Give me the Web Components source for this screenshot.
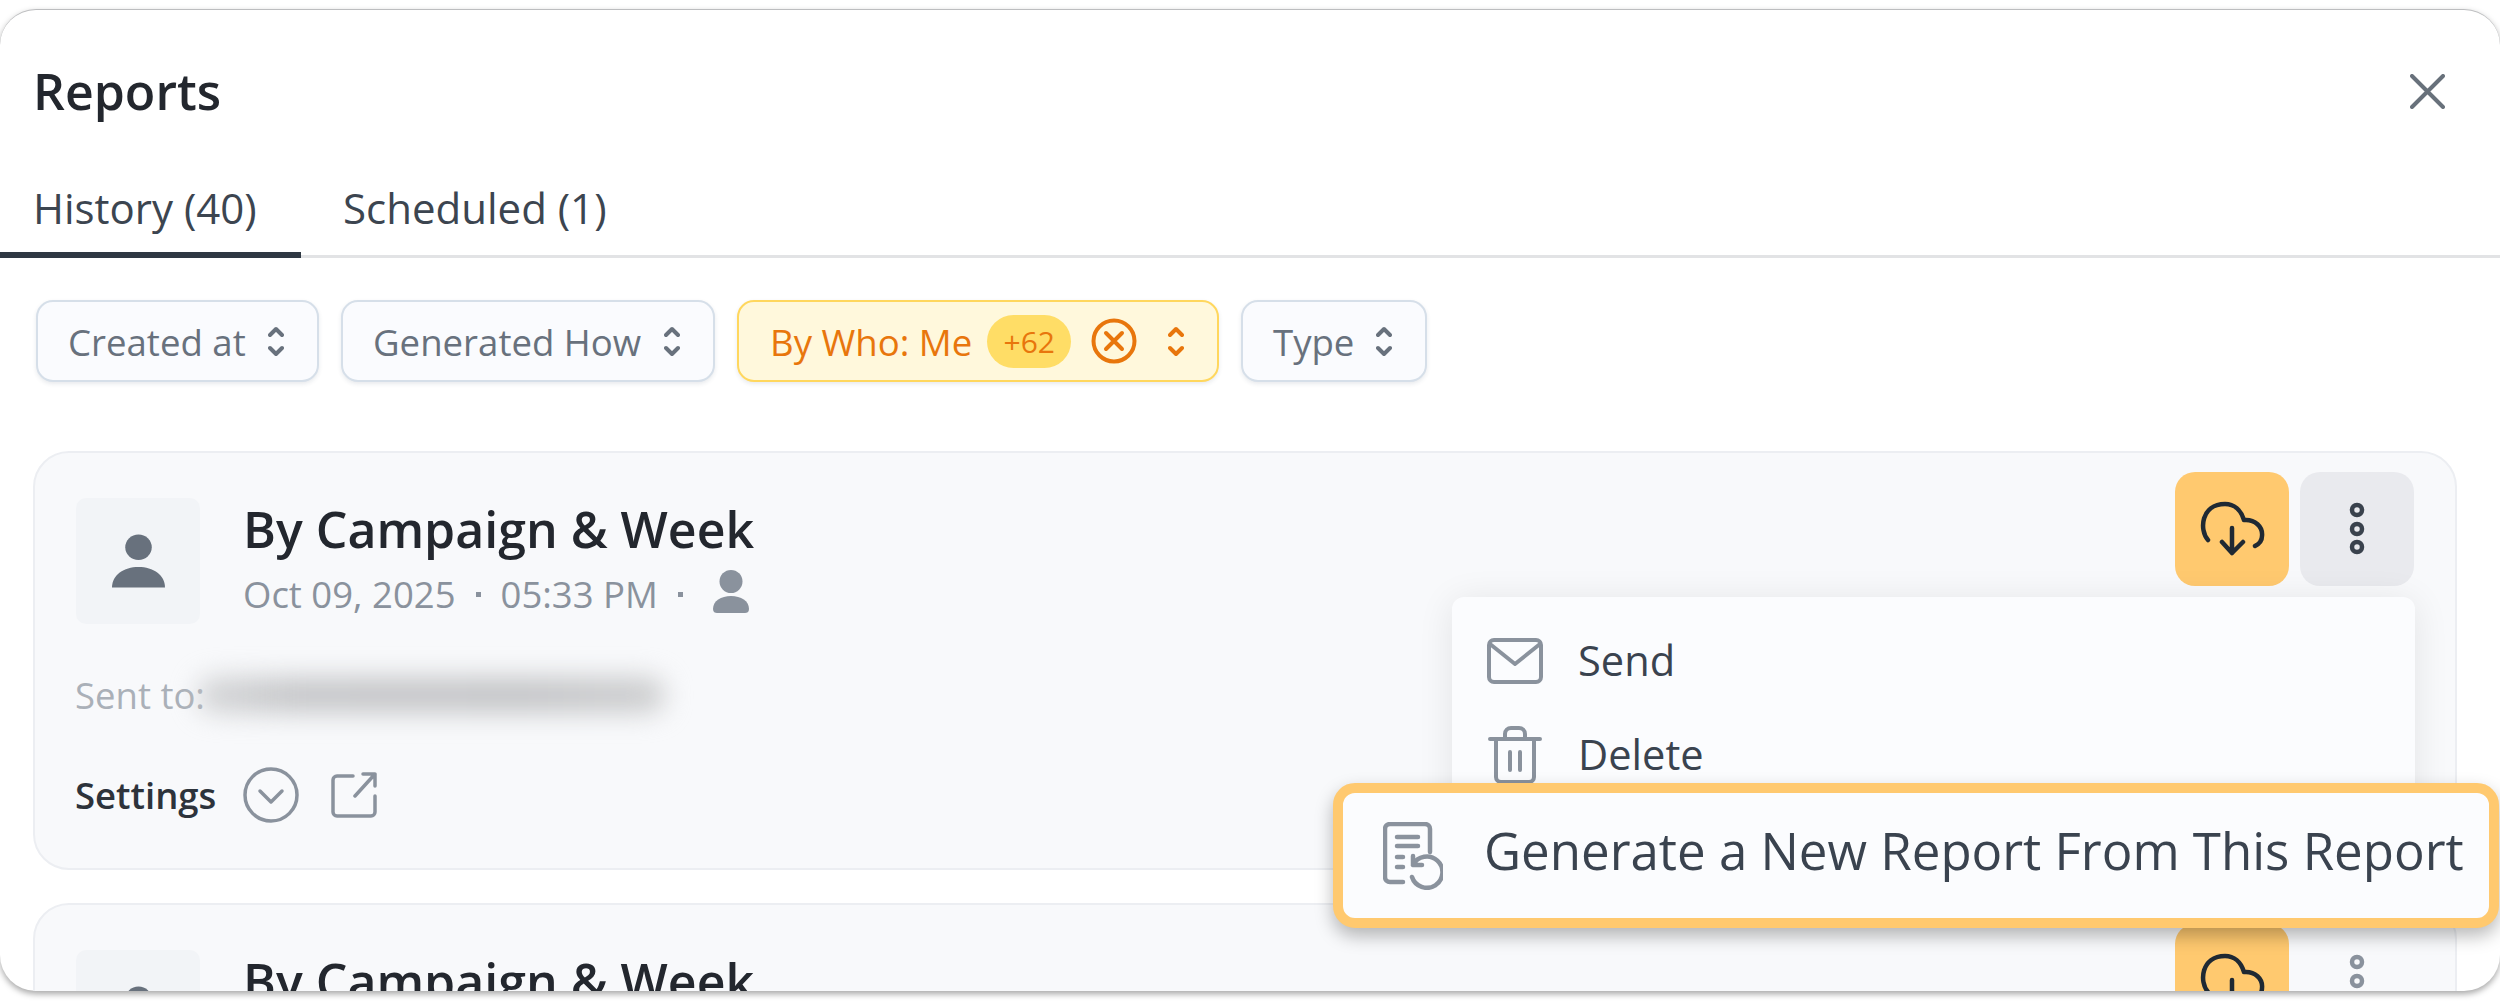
<!DOCTYPE html>
<html>
<head>
<meta charset="utf-8">
<title>Reports</title>
<style>
  html, body { margin: 0; background: #fff; }
  body { font-family: "Open Sans", "Liberation Sans", sans-serif; color: #23272e; height: 1005px; overflow: hidden; }
</style>
</head>
<body>
<report-modal>
  <span slot="title">Reports</span>
  <modal-tab slot="tabs" active>History (40)</modal-tab>
  <modal-tab slot="tabs">Scheduled (1)</modal-tab>
  <filter-chip slot="filters" style="--w:283px">Created at</filter-chip>
  <filter-chip slot="filters" style="--w:374px">Generated How</filter-chip>
  <filter-chip slot="filters" style="--w:482px" active count="+62">By Who: Me</filter-chip>
  <filter-chip slot="filters" style="--w:186px">Type</filter-chip>
  <report-card style="z-index:2" open>
    <span slot="title">By Campaign &amp; Week</span>
    <span slot="date">Oct 09, 2025</span>
    <span slot="time">05:33 PM</span>
    <action-menu slot="menu"></action-menu>
  </report-card>
  <report-card>
    <span slot="title">By Campaign &amp; Week</span>
    <span slot="date">Oct 09, 2025</span>
    <span slot="time">05:33 PM</span>
  </report-card>
</report-modal>

<script>
const PERSON = `<svg viewBox="0 0 54 54" width="100%" height="100%" fill="currentColor"><ellipse cx="27" cy="13" rx="13.5" ry="13"/><path d="M0 54c0-13 12-21 27-21s27 8 27 21z"/></svg>`;
const PERSON_SMALL = `<svg viewBox="0 0 36 43" width="100%" height="100%" fill="currentColor"><ellipse cx="18" cy="11.5" rx="11.5" ry="11.5"/><path d="M0 39c0-8 8-13 18-13s18 5 18 13c0 3-2 4-4 4H4c-2 0-4-1-4-4z"/></svg>`;

class ReportModal extends HTMLElement {
  constructor() {
    super();
    this.attachShadow({ mode: 'open' }).innerHTML = `
<style>
  :host { display: block; height: 982px; margin-top: 9px; box-sizing: border-box; overflow: hidden;
    background: #fff; border-radius: 36px; border-top: 1px solid #bcbdbf;
    box-shadow: 0 3px 6px rgba(0,0,0,.35); }
  header { display: flex; justify-content: space-between; align-items: center; height: 164px; padding: 0 55px 0 33px; box-sizing: border-box; }
  .title { font-size: 50px; font-weight: 600; color: #23272e; position: relative; top: -1px; }
  .close { width: 35px; height: 35px; position: relative; top: -1px; }
  nav { display: flex; height: 85px; border-bottom: 3px solid #e2e3e5; box-sizing: border-box; margin-top: -1px; }
  .filters { display: flex; gap: 22px; padding: 42px 0 0 36px; height: 82px; }
  .cards { display: flex; flex-direction: column; gap: 33px; padding: 69px 43px 0 33px; }
</style>
<header>
  <div class="title"><slot name="title"></slot></div>
  <svg class="close" viewBox="0 0 35 35" fill="none" stroke="#68717b" stroke-width="4" stroke-linecap="round"><path d="M2 2l31 31M33 2L2 33"/></svg>
</header>
<nav><slot name="tabs"></slot></nav>
<div class="filters"><slot name="filters"></slot></div>
<div class="cards"><slot></slot></div>`;
  }
}

class ModalTab extends HTMLElement {
  constructor() {
    super();
    this.attachShadow({ mode: 'open' }).innerHTML = `
<style>
  :host { display: block; position: relative; font-size: 42px; color: #3c4550; line-height: 70px; height: 82px; padding: 0 0 0 33px; box-sizing: border-box; white-space: nowrap; }
  :host([active]) { width: 301px; }
  :host([active])::after { content: ""; position: absolute; left: 0; right: 0; bottom: -3px; height: 6px; background: #2f3843; }
  :host(:not([active])) { padding-left: 42px; }
</style>
<slot></slot>`;
  }
}

class FilterChip extends HTMLElement {
  constructor() {
    super();
    this.attachShadow({ mode: 'open' });
  }
  connectedCallback() {
    const count = this.getAttribute('count');
    const extra = count ? `<span class="pill">${count}</span>
      <svg class="clear" viewBox="0 0 46 46" fill="none" stroke="currentColor" stroke-width="4" stroke-linecap="round"><circle cx="23" cy="23" r="20.5"/><path d="M15 15l16 16M31 15L15 31"/></svg>` : '';
    this.shadowRoot.innerHTML = `
<style>
  :host { display: flex; align-items: center; box-sizing: border-box; width: var(--w); height: 82px; padding: 0 33px 0 30px;
    background: #fafbfe; border: 2px solid #d6dfe9; border-radius: 17px; font-size: 36.6px; color: #68717d; white-space: nowrap;
    box-shadow: 0 2px 4px rgba(30,50,80,.1); }
  :host([active]) { background: #fff8dc; border-color: #ffd75e; color: #e8760c; padding-left: 31px; }
  slot { display: block; padding-top: 2px; }
  .pill { margin-left: 15px; height: 53px; width: 84px; border-radius: 27px; background: #ffdd66; font-size: 30px; display: flex; align-items: center; justify-content: center; flex: none; }
  .clear { width: 46px; height: 46px; margin-left: 20px; flex: none; }
  .arrows { width: 16px; height: 31px; margin-left: auto; flex: none; }
</style>
<slot></slot>${extra}
<svg class="arrows" viewBox="0 0 16 31" fill="none" stroke="currentColor" stroke-width="4" stroke-linecap="round" stroke-linejoin="round"><path d="M2 9l6-6 6 6M2 22l6 6 6-6"/></svg>`;
  }
}

class ReportCard extends HTMLElement {
  constructor() {
    super();
    this.attachShadow({ mode: 'open' });
  }
  connectedCallback() {
    const open = this.hasAttribute('open');
    this.shadowRoot.innerHTML = `
<style>
  :host { display: block; position: relative; box-sizing: border-box; height: 419px; flex: none; background: #f8f9fb;
    border: 2px solid #eceef2; border-radius: 36px; padding: 19px 41px 0 41px; }
  .top { display: flex; align-items: flex-start; }
  .avatar { width: 124px; height: 126px; margin-top: 26px; background: #f2f4f7; border-radius: 10px; color: #68717d; display: flex; align-items: center; justify-content: center; flex: none; }
  .avatar div { width: 53px; height: 54px; }
  .info { margin: 25px 0 0 43px; flex: 1; }
  .name { font-size: 50px; font-weight: 600; line-height: 64px; color: #23272e; white-space: nowrap; }
  .meta { display: flex; align-items: center; font-size: 36.5px; line-height: 50px; color: #8a929d; margin-top: 8px; white-space: nowrap; }
  .dot { width: 5px; height: 5px; background: #8a929d; margin: 0 20px; }
  .meta .who { width: 36px; height: 43px; margin-left: 10px; color: #8a929d; margin-top: -5px; }
  .btns { display: flex; gap: 11px; }
  .btn { width: 114px; height: 114px; border-radius: 20px; flex: none; }
  .dl { background: #ffc96f; }
  .more { ${open ? 'background: #e9eaee;' : ''} color: ${open ? '#3a424d' : '#8a929d'}; }
  .btn svg { display: block; }
  .sent { display: flex; align-items: center; margin: 48px 0 0 -1px; font-size: 36.5px; line-height: 46px; color: #aab0b8; white-space: nowrap; }
  .blur { width: 468px; height: 36px; margin-left: -8px; background: linear-gradient(90deg, rgba(198,199,201,.7), #c6c7c9 20%, #c4c5c7 70%, #cdcecf); border-radius: 18px; filter: blur(13px); }
  .settings { display: flex; align-items: center; margin: 49px 0 0 -1px; font-size: 36.5px; font-weight: 600; color: #2d333b; line-height: 56px; white-space: nowrap; }
  .settings svg { flex: none; }
  .chev { width: 56px; height: 56px; margin-left: 27px; }
  .ext { width: 46px; height: 46px; margin-left: 32px; }
</style>
<div class="top">
  <div class="avatar"><div>${PERSON}</div></div>
  <div class="info">
    <div class="name"><slot name="title"></slot></div>
    <div class="meta"><slot name="date"></slot><span class="dot"></span><slot name="time"></slot><span class="dot"></span><span class="who">${PERSON_SMALL}</span></div>
  </div>
  <div class="btns">
    <div class="btn dl"><svg viewBox="0 0 114 114" width="114" height="114" fill="none" stroke="#1f2933" stroke-width="4.5" stroke-linecap="round" stroke-linejoin="round"><path d="M33 68C24 58 26 32 50 32C59 32 66 38 69 48C80 47 88 55 87 64C87 68 84 72 80 74M57 56V81M47 70L57 81L68 70"/></svg></div>
    <div class="btn more"><svg viewBox="0 0 114 114" width="114" height="114" fill="none" stroke="currentColor" stroke-width="4.5"><circle cx="57" cy="38" r="5"/><circle cx="57" cy="57" r="5"/><circle cx="57" cy="75" r="5"/></svg></div>
  </div>
</div>
<div class="sent">Sent to:<span class="blur"></span></div>
<div class="settings">Settings
  <svg class="chev" viewBox="0 0 56 56" fill="none" stroke="#8a929d" stroke-width="3.5" stroke-linecap="round" stroke-linejoin="round"><circle cx="28" cy="28" r="26"/><path d="M17 24l11 11 11-11"/></svg>
  <svg class="ext" viewBox="0 0 46 46" fill="none" stroke="#8a929d" stroke-width="3.5" stroke-linecap="round" stroke-linejoin="round"><path d="M22 4H6a4 4 0 0 0-4 4v32a4 4 0 0 0 4 4h34a4 4 0 0 0 4-4V24M44 2H32M44 2v12M44 2L24 24"/></svg>
</div>
<slot name="menu"></slot>`;
  }
}

class ActionMenu extends HTMLElement {
  constructor() {
    super();
    this.attachShadow({ mode: 'open' }).innerHTML = `
<style>
  :host { display: block; position: absolute; top: 144px; right: 40px; width: 963px; height: 300px; box-sizing: border-box;
    background: #fbfcfe; border-radius: 12px; box-shadow: 0 4px 36px rgba(0,0,0,.09); padding-top: 17px; }
  .item { display: flex; align-items: center; height: 94px; padding-left: 35px; font-size: 41.6px; color: #3a434f; }
  .item svg { flex: none; }
  .item span { padding-bottom: 2px; margin-left: -1px; }
  .send { width: 56px; height: 46px; margin-right: 36px; }
  .trash { width: 56px; height: 58px; margin-right: 36px; }
  .hero { position: absolute; left: -119px; top: 186px; width: 1166px; height: 145px; box-sizing: border-box; display: flex; align-items: center;
    background: #fbfcfe; border: 10px solid #ffc96f; border-radius: 22px; box-shadow: 0 8px 18px rgba(0,0,0,.28);
    padding-left: 40px; font-size: 51px; color: #3a434f; white-space: nowrap; }
  .hero svg { width: 60px; height: 68px; margin-right: 44px; flex: none; }
  .hero span { padding-bottom: 11px; margin-left: -3px; }
</style>
<div class="item"><svg class="send" viewBox="0 0 56 46" fill="none" stroke="#8a929d" stroke-width="4" stroke-linecap="round" stroke-linejoin="round"><rect x="2" y="2" width="52" height="42" rx="5"/><path d="M3 6l25 20L53 6"/></svg><span>Send</span></div>
<div class="item"><svg class="trash" viewBox="0 0 56 58" fill="none" stroke="#8a929d" stroke-width="4" stroke-linecap="round" stroke-linejoin="round"><path d="M3 13h50M9 13v38a5 5 0 0 0 5 5h28a5 5 0 0 0 5-5V13M18 13V8a6 6 0 0 1 6-6h8a6 6 0 0 1 6 6v5M23 26v18M33 26v18"/></svg><span>Delete</span></div>
<div class="hero"><svg viewBox="0 0 60 68" fill="none" stroke="#8a929d" stroke-width="4.5" stroke-linecap="round" stroke-linejoin="round"><path d="M20 60H7a5 5 0 0 1-5-5V7a5 5 0 0 1 5-5h35a5 5 0 0 1 5 5v23M14 15h21M14 24h21M14 35h6M14 45h6"/><path d="M30 34v9h9M30 43A15.6 15.6 0 1 1 29 55"/></svg><span>Generate a New Report From This Report</span></div>`;
  }
}

customElements.define('report-modal', ReportModal);
customElements.define('modal-tab', ModalTab);
customElements.define('filter-chip', FilterChip);
customElements.define('report-card', ReportCard);
customElements.define('action-menu', ActionMenu);
</script>
</body>
</html>
